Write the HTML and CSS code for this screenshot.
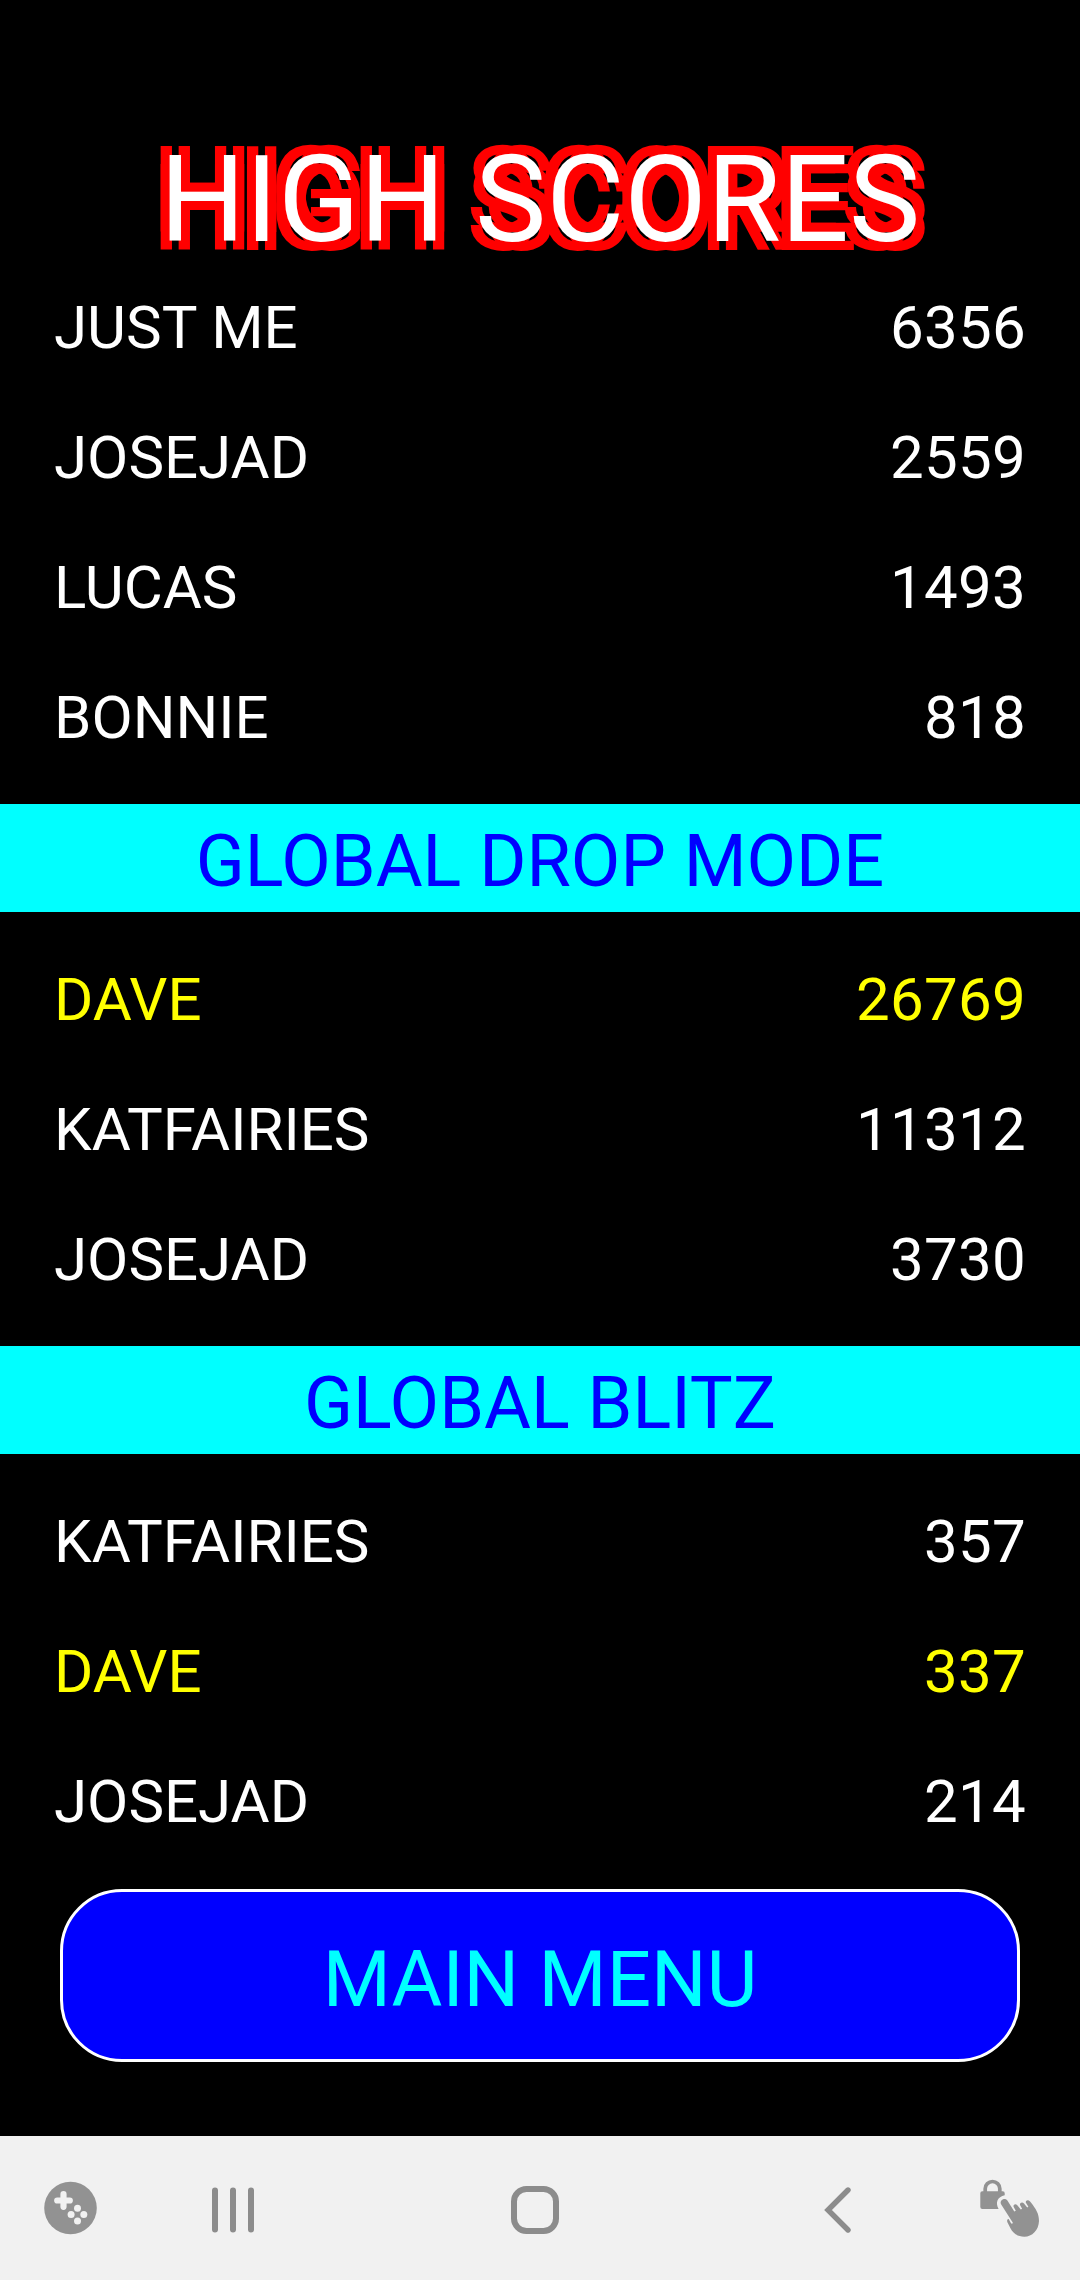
FILE: index.html
```html
<!DOCTYPE html>
<html lang="en">

<head>
    <meta charset="UTF-8">
    <meta name="viewport" content="width=device-width, initial-scale=1.0">
    <title>High Scores</title>
    <link rel="stylesheet" href="styles.css">
</head>

<body>
    <main class="scores">
        <h1 class="title">HIGH SCORES</h1>

        <ul class="scoreList">
            <li><span>JUST ME</span><span class="points">6356</span></li>
            <li><span>JOSEJAD</span><span class="points">2559</span></li>
            <li><span>LUCAS</span><span class="points">1493</span></li>
            <li><span>BONNIE</span><span class="points">818</span></li>
        </ul>

        <h2 class="modeName">GLOBAL DROP MODE</h2>
        <ul class="scoreList">
            <li class="mine"><span>DAVE</span><span class="points">26769</span></li>
            <li><span>KATFAIRIES</span><span class="points">11312</span></li>
            <li><span>JOSEJAD</span><span class="points">3730</span></li>
        </ul>

        <h2 class="modeName">GLOBAL BLITZ</h2>
        <ul class="scoreList">
            <li><span>KATFAIRIES</span><span class="points">357</span></li>
            <li class="mine"><span>DAVE</span><span class="points">337</span></li>
            <li><span>JOSEJAD</span><span class="points">214</span></li>
        </ul>

        <button class="mainMenu" type="button">MAIN MENU</button>
    </main>

    <nav class="navBar">
        <!-- game tools -->
        <svg class="navGame" width="54" height="54" viewBox="0 0 54 54">
            <circle cx="27.500" cy="27" r="26.3" fill="#929292" />
            <path d="M20.500 13.2v12.6M14.2 19.5h12.6" stroke="#f1f1f1" stroke-width="6.2" stroke-linecap="round" />
            <g fill="#f1f1f1">
                <circle cx="34.5" cy="27.2" r="3.5" />
                <circle cx="28.1" cy="33.6" r="3.5" />
                <circle cx="40.8" cy="33.6" r="3.5" />
                <circle cx="34.5" cy="40" r="3.5" />
            </g>
        </svg>
        <!-- recents -->
        <svg class="navRecent" width="42" height="46" viewBox="0 0 42 46">
            <path d="M3 3.5v39M21 3.5v39M39 3.5v39" stroke="#8c8c8c" stroke-width="6" stroke-linecap="round" />
        </svg>
        <!-- home -->
        <svg class="navHome" width="48" height="48" viewBox="0 0 48 48">
            <rect x="3" y="3" width="42" height="42" rx="12.5" fill="none" stroke="#8c8c8c" stroke-width="6" />
        </svg>
        <!-- back -->
        <svg class="navBack" width="28" height="46" viewBox="0 0 28 46">
            <path d="M24 3L4 23l20 20" fill="none" stroke="#8c8c8c" stroke-width="5.4" stroke-linecap="round" />
        </svg>
        <!-- touch lock -->
        <svg class="navLock" width="60" height="60" viewBox="0 0 60 60">
            <path d="M5.2 13.5V9.8a7.3 7.3 0 0 1 14.6 0v3.7" fill="none" stroke="#929292" stroke-width="3.7" />
            <path d="M2.3 12.3h20.4a2 2 0 0 1 2 2v2C17.5 18 15 23.5 18.6 30H2.3a2 2 0 0 1-2-2V14.3a2 2 0 0 1 2-2z" fill="#929292" />
            <path d="M21.4 21.5c1.7-2 4.5-2 6 0L34.3 32.5l1.5-.7-2.200-4c-.6-2 1.8-3.400 3.7-1.600l3.5 4.300 1.300-.8-2.100-3.600c-.5-2.400 2.200-3.500 4-1.700l3.200 4.200 1.200-.8-2.600-4.300c-.2-2.200 2.300-3 4.300-1C56.500 30.500 59 35 59 42c-.4 9.400-6.700 15.700-14.700 15.700-7.300 0-11.300-3.700-13.700-8.200l-3.200-6.300c-.8-2 .3-3.500 1.400-3l2.200 4c.7.9 2.100.4 1.700-.8L21.200 25.500c-.9-1.500-.7-3 .2-4z" fill="#929292" />
        </svg>
    </nav>
</body>

</html>
```
FILE: styles.css
```css
body,
ul,
li,
h1,
h2 {
    margin: 0;
    padding: 0;
    list-style: none;
    font-weight: normal;
    box-sizing: border-box;
}

body {
    display: flex;
    flex-direction: column;
    width: 1080px;
    height: 2280px;
    background: #000;
    color: #fff;
    font-family: Roboto, sans-serif;
}

.scores {
    flex: 1;
    display: flex;
    flex-direction: column;
    padding-top: 128px;
}

.title {
    height: 135px;
    line-height: 145px;
    font-size: 120px;
    text-align: center;
    text-shadow: 9px 9px #f00, -9px 9px #f00, 9px -9px #f00, -9px -9px #f00;
}

.scoreList {
    padding: 0 54px;
    font-size: 60px;
}

.scoreList li {
    display: flex;
    justify-content: space-between;
    height: 130px;
    line-height: 130px;
}

.scoreList .points {
    letter-spacing: 0.3px;
}

.scoreList .mine {
    color: #ff0;
}

.modeName {
    height: 108px;
    margin: 21px 0 23px;
    line-height: 115px;
    background: #0ff;
    color: #00f;
    font-size: 72px;
    text-align: center;
}

.mainMenu {
    height: 173px;
    margin: 22px 60px 0;
    padding: 7px 0 0;
    border: 3px solid #fff;
    border-radius: 62px;
    background: #00f;
    color: #0ff;
    font-family: inherit;
    font-size: 78px;
}

.navBar {
    display: flex;
    align-items: flex-start;
    height: 144px;
    padding: 45px 40px 0 43px;
    box-sizing: border-box;
    background: #f1f1f1;
}

.navRecent {
    margin: 6px 0 0 115px;
}

.navHome {
    margin: 5px 0 0 257px;
}

.navBack {
    margin: 6px 0 0 265px;
}

.navLock {
    margin: -2px 0 0 128px;
}
```
